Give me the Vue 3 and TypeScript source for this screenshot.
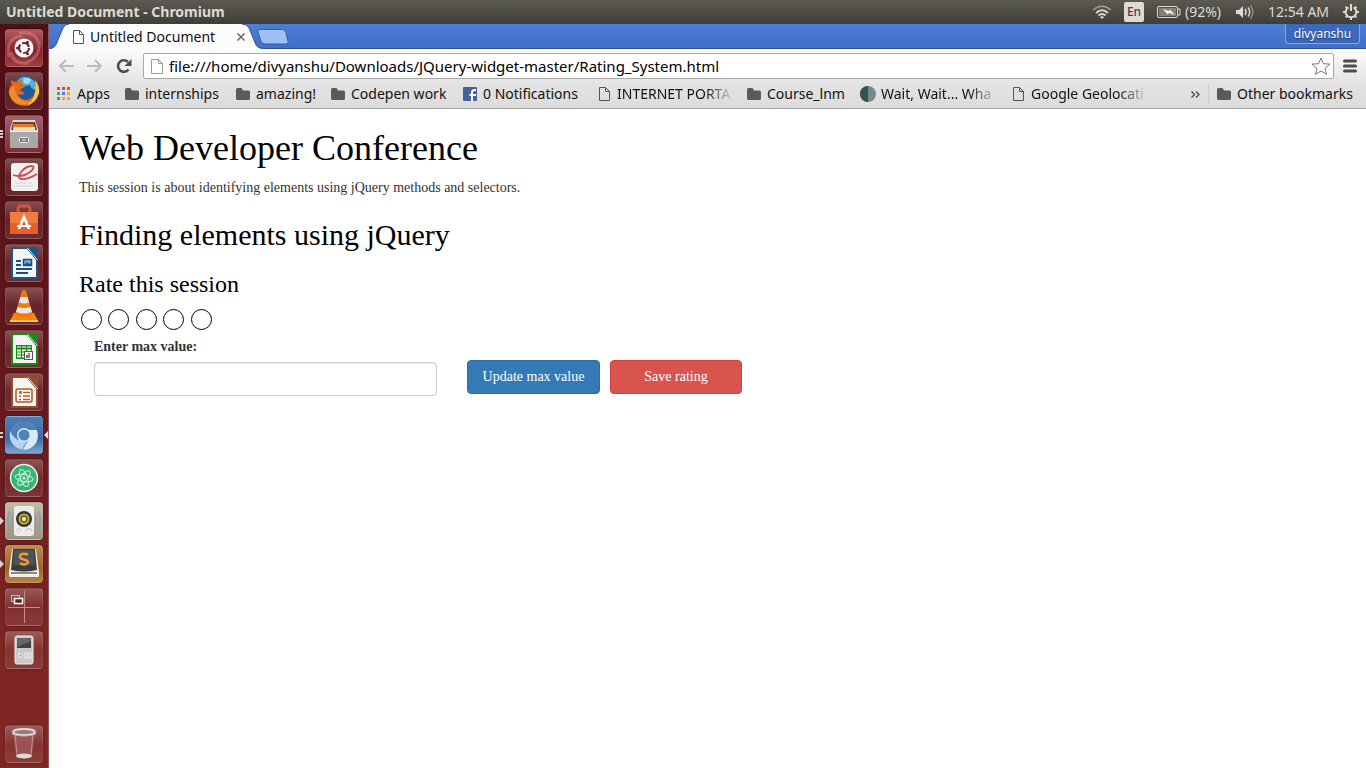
<script setup lang="ts">
import { ref } from 'vue'

interface Launcher {
  id: string
  label: string
  tint?: string
  marks?: number
  active?: boolean
}
interface Bookmark {
  icon: 'apps' | 'folder' | 'facebook' | 'page' | 'disc'
  label: string
  width: number
  fade?: boolean
}

const launchers: Launcher[] = [
  { id: 'dash', label: 'Search your computer', tint: 'dash' },
  { id: 'firefox', label: 'Firefox' },
  { id: 'files', label: 'Files', tint: 'rose', marks: 3 },
  { id: 'viewer', label: 'Document Viewer' },
  { id: 'software', label: 'Software Center' },
  { id: 'writer', label: 'Writer' },
  { id: 'vlc', label: 'VLC' },
  { id: 'calc', label: 'Calc' },
  { id: 'impress', label: 'Impress' },
  { id: 'chromium', label: 'Chromium', tint: 'blue', marks: 2, active: true },
  { id: 'atom', label: 'Atom' },
  { id: 'rhythmbox', label: 'Rhythmbox', tint: 'sand', marks: 1 },
  { id: 'sublime', label: 'Sublime Text', tint: 'amber', marks: 1 },
  { id: 'workspace', label: 'Workspace Switcher' },
  { id: 'player', label: 'Media Player' },
  { id: 'trash', label: 'Trash' },
]

const bookmarks: Bookmark[] = [
  { icon: 'apps', label: 'Apps', width: 68 },
  { icon: 'folder', label: 'internships', width: 111 },
  { icon: 'folder', label: 'amazing!', width: 95 },
  { icon: 'folder', label: 'Codepen work', width: 132 },
  { icon: 'facebook', label: '0 Notifications', width: 134 },
  { icon: 'page', label: 'INTERNET PORTA', width: 150, fade: true },
  { icon: 'folder', label: 'Course_lnm', width: 114 },
  { icon: 'disc', label: 'Wait, Wait... Wha', width: 150, fade: true },
  { icon: 'page', label: 'Google Geolocati', width: 150, fade: true },
]

const dots = ['#e8453c', '#e8453c', '#e8453c', '#3aa757', '#4285f4', '#f9ab00', '#3aa757', '#f9ab00', '#f9ab00']
const address = ref('file:///home/divyanshu/Downloads/JQuery-widget-master/Rating_System.html')
const maxValue = ref('')
const stars = ref(5)

function updateMax(): void {
  const n = Number(maxValue.value)
  if (n > 0) stars.value = n
}
</script>

<template>
  <div class="desktop">
    <header class="panel">
      <span class="panel-title">Untitled Document - Chromium</span>
      <div class="tray">
        <svg class="wifi" width="20" height="16" viewBox="0 0 20 16" fill="none" stroke="#dfdbd2">
          <path d="M1 6Q10-1.500 19 6" stroke-width="1.500" opacity=".55" />
          <path d="M4 9Q10 3.500 16 9" stroke-width="1.800" />
          <path d="M6.500 11.500Q10 8.500 13.500 11.500" stroke-width="1.800" />
          <path d="M8 13q2-1.500 4 0l-2 2z" fill="#dfdbd2" stroke="none" />
        </svg>
        <span class="lang">En</span>
        <span class="battery">
          <svg width="24" height="14" viewBox="0 0 24 14">
            <rect x=".5" y="1.500" width="20" height="11" rx="1.500" fill="none" stroke="#dfdbd2" />
            <rect x="2" y="3" width="17" height="8" fill="#85817a" />
            <path d="M21 4h2v6h-2" fill="none" stroke="#dfdbd2" />
            <path d="M6 4l6 2 1-1.500L18 10l-6-2-1.500 1.500z" fill="#f3efe6" />
          </svg>
          (92%)
        </span>
        <svg class="sound" width="20" height="16" viewBox="0 0 20 16" fill="none" stroke="#dfdbd2" stroke-width="1.500">
          <path d="M1 6h3l4-4v12l-4-4H1z" fill="#dfdbd2" stroke="none" />
          <path d="M10 5q2 3 0 6M13 3.500q3.500 4.500 0 9" />
          <path d="M15.500 1.500q5 6.500 0 13" opacity=".45" />
        </svg>
        <span class="clock">12:54 AM</span>
        <svg width="18" height="18" viewBox="0 0 18 18" fill="none" stroke="#dfdbd2">
          <path d="M6.500 4.300a5.300 5.300 0 1 0 5 0" stroke-width="2" />
          <path d="M9 1v7" stroke-width="2" />
          <path d="M3.600 3.600l1.600 1.600M14.400 3.600l-1.600 1.600M1 9h2.500M14.500 9H17M3.600 14.400l1.600-1.600M14.400 14.400l-1.600-1.600M9 14.500V17" stroke-width="2" />
        </svg>
      </div>
    </header>

    <div class="workspace">
      <nav class="dock" aria-label="Launcher">
        <button
          v-for="item in launchers"
          :key="item.id"
          class="tile"
          :class="[item.tint, { last: item.id === 'trash' }]"
          :aria-label="item.label"
        >
          <svg width="38" height="38" viewBox="0 0 38 38">
            <g v-if="item.id === 'dash'">
              <path d="M4 28Q0 9 17 7M14 4q18-2 20 12M34 12q2 17-14 22M24 34Q8 36 6 23" fill="none" stroke="#d99a9a" stroke-width="3" opacity=".4" />
              <circle cx="19" cy="19" r="9.500" fill="#fff" />
              <circle cx="19" cy="19" r="5" fill="none" stroke="#74232a" stroke-width="2.200" stroke-dasharray="8.500 2" />
              <g fill="#74232a"><circle cx="12.500" cy="19" r="1.500" /><circle cx="22.500" cy="13.200" r="1.500" /><circle cx="22.500" cy="24.800" r="1.500" /></g>
            </g>
            <g v-else-if="item.id === 'firefox'">
              <circle cx="20" cy="17" r="13" fill="#1f5c9f" />
              <path d="M12 9Q19 1 28 8q4 5 3 10-5-1-6-5l-5 1z" fill="#4fb4e4" />
              <path d="M18 7q5-3 8 1l-3 4-4-1z" fill="#b5e8f6" opacity=".8" />
              <path d="M6 8q0 3 1 4Q3 17 4 22q3 11 15 12 12-1 15-13 1-8-4-12 2 7 0 12-3 7-10 7-6-1-7-6 4 2 7-1-2-2-5-2 1-3 5-4-1-3-5-3 1-3 3-4-4-1-6 2-4 0-6-2z" fill="#e8681b" />
              <path d="M30 8q5 6 4 13-3 10-13 13 8-6 9-14 1-6 0-12z" fill="#fbc93d" />
              <path d="M4 20q2 10 10 12 8 2 12-3-8 1-13-4-4-5-3-11-5 1-6 6z" fill="#f08a2a" />
            </g>
            <g v-else-if="item.id === 'files'">
              <path d="M8 5h22l3 9v18H5V14z" fill="#ded9d2" />
              <path d="M8 7h22l2 8H6z" fill="#5a4b45" />
              <path d="M8 9h20l2 6H8z" fill="#e9772c" /><path d="M9 12h21v3H8z" fill="#ffd9ac" />
              <rect x="5" y="16" width="28" height="17" rx="1" fill="#a9a9a6" /><path d="M5 16.500h28" stroke="#eee" />
              <rect x="14.500" y="22.500" width="9" height="5" rx="1" fill="#777" stroke="#eee" /><path d="M17 25h4" stroke="#fff" />
            </g>
            <g v-else-if="item.id === 'viewer'">
              <rect x="6" y="5" width="27" height="28" rx="3" fill="#f1f0ef" />
              <path d="M8 17q9 3 17-3 6-5 2-6-6 0-11 6-4 6 0 7 6 1 16-5" fill="none" stroke="#d3444b" stroke-width="1.800" />
              <path d="M10 25h12M10 28h18M23 25h4" stroke="#d2d2d2" />
            </g>
            <g v-else-if="item.id === 'software'">
              <path d="M13 12V8q0-3 3-3h6q3 0 3 3v4" fill="none" stroke="#c95a3b" stroke-width="3" />
              <path d="M5 11h28v22H5z" fill="#e75f2b" /><path d="M5 11h28v11H5z" fill="#f27a43" />
              <path d="M14 28l5-12 5 12" fill="none" stroke="#fff" stroke-width="2.500" />
              <path d="M12 25h14" stroke="#fff" stroke-width="2" />
            </g>
            <g v-else-if="item.id === 'writer' || item.id === 'calc' || item.id === 'impress'" :class="item.id">
              <path class="ink" d="M6 3h19l8 10v22H6z" />
              <path d="M8 5h14l9 11v17H8z" fill="#f5f5f3" />
              <path class="ink" d="M24 3h9v11z" /><path d="M22.500 4l10 12" stroke="#ddd" />
              <g v-if="item.id === 'writer'" fill="none" stroke="#17507c" stroke-width="2">
                <path d="M11 17h5M11 21h5M11 25h16M11 29h12" /><path d="M18.500 15.500h8v6h-8z" fill="#6db3e0" stroke-width="1.500" /><path d="M19 21l3-3 2 2 2-1v2z" fill="#17507c" stroke="none" />
              </g>
              <g v-else-if="item.id === 'calc'">
                <path d="M11 15h16v14H11z" fill="#178b1a" /><path d="M12 17h4M17 17h4M22 17h4" stroke="#8bd080" stroke-width="2" />
                <path d="M12 20.500h4M17 20.500h4M22 20.500h4M12 23.500h4M17 23.500h4M12 26.500h4M17 26.500h4" stroke="#ecf8e8" stroke-width="2" />
                <rect x="19.500" y="21.500" width="8" height="8" fill="#fff" stroke="#555" /><path d="M21 28v-3h2v3" fill="#2b82bf" /><path d="M23 28v-5h2v5" fill="#e3662b" />
              </g>
              <g v-else>
                <rect x="11" y="16" width="16" height="13" rx="2" fill="#fff" stroke="#b4541c" stroke-width="1.500" />
                <rect x="14" y="18" width="3" height="3" fill="#d6702d" /><path d="M18 19.500h7M14 23h2M18 23h7M14 26.500h2M18 26.500h7" stroke="#c4571b" stroke-width="1.500" />
              </g>
            </g>
            <g v-else-if="item.id === 'vlc'">
              <path d="M9 26h20l4 8H5z" fill="#f28b0c" /><path d="M5 33h28v2H5z" fill="#ffc050" />
              <path d="M17 4q2-2 4 0l7 24q-9 5-18 0z" fill="#f17b0b" />
              <path d="M15.500 10h7l1.500 5.500q-5 2-10 0zM12.700 20q6.500 2 12.700 0l1.600 5q-8 3-16 0z" fill="#e7e7e4" />
            </g>
            <g v-else-if="item.id === 'chromium'">
              <circle cx="19" cy="20" r="14" fill="#7faed9" />
              <path d="M5 17q3-9 13-11 10 0 15 10H19L14 27Q5 28 5 17z" fill="#4d7fb8" />
              <path d="M5 15q-2 10 6 16 3 2 6 2l4-8-8-1q-5-3-8-9z" fill="#b7d3ed" /><path d="M20 14h12q3 11-5 17-4 3-9 3l7-12q0-5-5-8z" fill="#dbe9f7" />
              <circle cx="19" cy="19" r="7" fill="#d7e6f5" /><circle cx="19" cy="19" r="5.500" fill="#4f83bd" />
            </g>
            <g v-else-if="item.id === 'atom'">
              <circle cx="19" cy="19" r="13.500" fill="#35b57c" stroke="#e6f1e9" stroke-width="1.500" />
              <g fill="none" stroke="#c9f2d3"><ellipse cx="19" cy="19" rx="3.500" ry="9" transform="rotate(-20 19 19)" /><ellipse cx="19" cy="19" rx="3.500" ry="9" transform="rotate(40 19 19)" /><ellipse cx="19" cy="19" rx="3.500" ry="9" transform="rotate(100 19 19)" /></g>
              <circle cx="19" cy="19" r="1.500" fill="#d9f7df" />
            </g>
            <g v-else-if="item.id === 'rhythmbox'">
              <path d="M8 11q-3 7 0 15M5 9q-4 9 0 19M30 11q3 7 0 15M33 9q4 9 0 19" fill="none" stroke="#8b9da8" stroke-width="1.500" />
              <rect x="9" y="4" width="20" height="30" rx="3" fill="#eceded" />
              <circle cx="19" cy="17" r="8" fill="#34373a" /><circle cx="19" cy="17" r="5.500" fill="#c9ad27" /><circle cx="19" cy="17" r="3" fill="#e6dc84" stroke="#222" />
              <circle cx="14" cy="28" r="2" fill="none" stroke="#ccc" /><path d="M20 29q5-5 7 0" fill="none" stroke="#bbb" />
            </g>
            <g v-else-if="item.id === 'sublime'">
              <path d="M7 4h24l3 23v4q0 1-2 1H6q-2 0-2-1v-4z" fill="#f3f1ee" />
              <path d="M6 27h26v2H6z" fill="#8b8884" />
              <path d="M8 4h22l2 21q-13 3-26 0z" fill="#3c3b3b" /><path d="M9 5h20l1 15H8z" fill="#535252" />
              <path d="M23 9.500q-7-2-8 1.500-1 2.500 4 3.500 4 1 4 3-2 3.500-8 1" fill="none" stroke="#f29a38" stroke-width="2.500" />
            </g>
            <g v-else-if="item.id === 'workspace'" fill="none" stroke="#c68b8b">
              <path d="M19.500 3v32M3 19.500h32" /><rect x="6.500" y="7.500" width="8" height="6" stroke="#bbb" /><rect x="9.500" y="10.500" width="8" height="5" fill="#4c2527" stroke="#fff" stroke-width="1.500" />
            </g>
            <g v-else-if="item.id === 'player'">
              <rect x="10" y="5" width="18" height="28" rx="2" fill="#cacaca" stroke="#eee" /><path d="M12 7h14v10H12z" fill="#444" /><path d="M12 7h14v3L12 16z" fill="#666" />
              <path d="M14 22v5l4-2.500zM20 22h2v5h-2zM24 22h2v5h-2z" fill="#aaa" stroke="#f4f4f4" />
            </g>
            <g v-else>
              <path d="M8 7h22l-3 24q-8 4-16 0z" fill="#a9696b" opacity=".55" /><path d="M10 9l2 21M28 9l-2 21" stroke="#dfb7b7" opacity=".6" />
              <ellipse cx="19" cy="7" rx="11" ry="3" fill="#9b7b7a" stroke="#dedad7" stroke-width="2" /><path d="M7 9q12 4 24 0" stroke="#bbb" fill="none" />
              <ellipse cx="19" cy="31" rx="8" ry="2.500" fill="#dadada" />
            </g>
          </svg>
          <svg v-if="item.marks" class="mark" width="4" height="10" viewBox="0 0 4 10" fill="#d9cccc">
            <path v-if="item.marks === 1" d="M0 1l4 4-4 4z" />
            <path v-else-if="item.marks === 2" d="M0 2h3v2H0zM0 6h3v2H0z" />
            <path v-else d="M0 1h3v2H0zM0 4h3v2H0zM0 7h3v2H0z" />
          </svg>
          <svg v-if="item.active" class="mark current" width="4" height="8" viewBox="0 0 4 8"><path d="M4 0v8L0 4z" fill="#e5dddd" /></svg>
        </button>
      </nav>

      <div class="browser">
        <div class="tabs">
          <div class="tab">
            <svg class="tab-shape" viewBox="0 0 216 25" preserveAspectRatio="none">
              <path d="M0 25q5 0 7-4L14 4q2-4 6-4h173q5 0 7 4l7 17q2 4 9 4z" fill="#fbfbfb" />
              <path d="M0 24.500q5 0 7-4L14 4q2-4 6-4M193 0q5 0 7 4l7 17q2 3.500 9 3.500" fill="none" stroke="#315596" />
            </svg>
            <svg width="11" height="14" viewBox="0 0 11 14" fill="#fff" stroke="#555"><path d="M.5.5h6l4 4v9H.5zM6.500.5v4h4" /></svg>
            <span class="tab-name">Untitled Document</span>
            <button class="close" aria-label="Close tab"><svg width="8" height="8" viewBox="0 0 8 8" stroke="#666" stroke-width="1.500"><path d="M.5.5l7 7M7.500.5l-7 7" /></svg></button>
          </div>
          <button class="new-tab" aria-label="New tab">
            <svg width="32" height="16" viewBox="0 0 32 16"><path d="M3 .5h22q3 0 4 3l2 9q1 2.500-2 2.500H8q-3 0-4-3L1 3Q0 .5 3 .5z" fill="#9dc1f2" stroke="#335da9" /></svg>
          </button>
          <button class="profile">divyanshu</button>
        </div>

        <div class="chrome">
          <div class="toolbar">
            <button class="nav" aria-label="Back"><svg width="16" height="14" viewBox="0 0 16 14" fill="none" stroke="#bcbcbc" stroke-width="2"><path d="M16 7H2M8 1L2 7l6 6" /></svg></button>
            <button class="nav" aria-label="Forward"><svg width="16" height="14" viewBox="0 0 16 14" fill="none" stroke="#bcbcbc" stroke-width="2"><path d="M0 7h14M8 1l6 6-6 6" /></svg></button>
            <button class="nav" aria-label="Reload"><svg width="16" height="16" viewBox="0 0 16 16"><path d="M12.500 11.500A5.800 5.800 0 1 1 12 4" fill="none" stroke="#4d4d4d" stroke-width="2.600" /><path d="M15.500 1v7H8.500z" fill="#4d4d4d" /></svg></button>
            <div class="omnibox">
              <svg width="12" height="15" viewBox="0 0 12 15" fill="#fff" stroke="#999"><path d="M.5.5h7l4 4v10H.5zM7.500.5v4h4" /></svg>
              <input v-model="address" type="text" aria-label="Address" spellcheck="false" />
              <button class="star" aria-label="Bookmark this page"><svg width="20" height="18" viewBox="0 0 20 18"><path d="M10 1l2.400 5.700 6.600.4-5 4.200 1.600 6L10 14l-5.600 3.300 1.600-6-5-4.200 6.600-.4z" fill="#fff" stroke="#777" /></svg></button>
            </div>
            <button class="menu" aria-label="Menu"><svg width="14" height="14" viewBox="0 0 14 14" stroke="#4d4d4d" stroke-width="3" stroke-linecap="round"><path d="M1.500 2h11M1.500 7h11M1.500 12h11" /></svg></button>
          </div>

          <nav class="bookmarks" aria-label="Bookmarks">
            <a v-for="mark in bookmarks" :key="mark.label" href="#" class="bookmark" :style="{ width: mark.width + 'px' }">
              <span class="favicon">
                <svg v-if="mark.icon === 'apps'" width="14" height="14" viewBox="0 0 14 14">
                  <rect v-for="(dot, i) in dots" :key="i" :x="(i % 3) * 5" :y="Math.floor(i / 3) * 5" width="3" height="3" :fill="dot" />
                </svg>
                <svg v-else-if="mark.icon === 'folder'" width="14" height="12" viewBox="0 0 14 12"><path d="M0 1.500Q0 0 1.500 0h4L7 2.500h5.500Q14 2.500 14 4v6.500q0 1.500-1.500 1.500h-11Q0 12 0 10.500z" fill="#5a5a5a" /></svg>
                <svg v-else-if="mark.icon === 'facebook'" width="14" height="14" viewBox="0 0 14 14"><rect width="14" height="14" rx="1" fill="#45619d" /><path d="M9 14V5.500Q9 3 11.500 3h1.500M6.500 8H13" stroke="#fff" stroke-width="2" fill="none" /></svg>
                <svg v-else-if="mark.icon === 'page'" width="11" height="14" viewBox="0 0 11 14" fill="none" stroke="#555"><path d="M.5.5h6l4 4v9H.5zM6.500.5v4h4" /></svg>
                <svg v-else width="16" height="16" viewBox="0 0 16 16"><circle cx="8" cy="8" r="8" fill="#728c8b" /><path d="M8 0v16A8 8 0 0 1 8 0z" fill="#36524f" /></svg>
              </span>
              <span class="mark-name" :class="{ fade: mark.fade }">{{ mark.label }}</span>
            </a>
            <div class="overflow">
              <button class="more" aria-label="More bookmarks"><svg width="9" height="7" viewBox="0 0 9 7" fill="none" stroke="#555" stroke-width="1.500"><path d="M.5.5l3 3-3 3M5 .5l3 3-3 3" /></svg></button>
              <a href="#" class="bookmark other">
                <span class="favicon"><svg width="14" height="12" viewBox="0 0 14 12"><path d="M0 1.500Q0 0 1.500 0h4L7 2.500h5.500Q14 2.500 14 4v6.500q0 1.500-1.500 1.500h-11Q0 12 0 10.500z" fill="#5a5a5a" /></svg></span>
                <span class="mark-name">Other bookmarks</span>
              </a>
            </div>
          </nav>
        </div>

        <main class="page">
          <h1>Web Developer Conference</h1>
          <p>This session is about identifying elements using jQuery methods and selectors.</p>
          <h2>Finding elements using jQuery</h2>
          <h3>Rate this session</h3>
          <div class="rating">
            <button v-for="n in stars" :key="n" :aria-label="'Rate ' + n"></button>
          </div>
          <form @submit.prevent="updateMax">
            <label for="max-value">Enter max value:</label>
            <div class="controls">
              <input id="max-value" v-model="maxValue" type="text" />
              <div class="actions">
                <button type="submit" class="primary">Update max value</button>
                <button type="button" class="danger">Save rating</button>
              </div>
            </div>
          </form>
        </main>
      </div>
    </div>
  </div>
</template>

<style>
body { margin: 0; }
</style>

<style scoped>
* { box-sizing: border-box; }
button { padding: 0; border: 0; background: none; font: inherit; cursor: pointer; }
svg { display: block; flex: none; }
.desktop { display: flex; flex-direction: column; min-height: 100vh; font: 14px/20px "Noto Sans", sans-serif; }
.panel { display: flex; align-items: center; justify-content: space-between; height: 24px; padding: 0 6px; color: #dfdbd2; background: linear-gradient(#5b5951, #3f3e39); }
.panel-title { font-weight: 700; font-size: 14px; white-space: nowrap; }
.tray { display: flex; align-items: center; font-size: 14px; white-space: nowrap; }
.lang { width: 20px; height: 20px; margin: 0 13px 0 12px; border-radius: 2px; color: #45433e; background: #dfdbd2; font-size: 12px; font-weight: 500; text-align: center; }
.battery { display: flex; align-items: center; gap: 4px; width: 65px; }
.sound { margin: 0 13px; }
.clock { width: 62px; margin-right: 12px; }
.workspace { display: flex; flex: 1; }
.dock { display: flex; flex-direction: column; gap: 5px; flex: none; width: 49px; padding: 5px 5px 5px; border-right: 1px solid #8d5358; background: linear-gradient(#500e15, #671a1e 55%, #7e2622 85%, #7e2724); }
.tile { position: relative; width: 38px; height: 38px; border: 1px solid rgba(255, 255, 255, 0.1); border-radius: 4px; background: linear-gradient(rgba(255, 255, 255, 0.25), rgba(255, 255, 255, 0.06) 50%, rgba(255, 255, 255, 0.1)); box-shadow: 0 0 2px rgba(0, 0, 0, 0.5); }
.tile > svg:first-child { margin: -1px; }
.tile.dash { background: linear-gradient(#b45a5c, #86242a 55%, #a23a3c); }
.tile.rose { background: linear-gradient(#a6616b, #7d2c3a); }
.tile.blue { background: linear-gradient(#4f7fb8, #3a6aa4 60%, #78a5d2); }
.tile.sand { background: linear-gradient(#c2bba8, #9c957f); }
.tile.amber { background: linear-gradient(#bd8c53, #9c6229 60%, #b98043); }
.tile.last { margin-top: auto; }
.mark { position: absolute; left: -6px; top: 13px; }
.mark.current { left: auto; right: -6px; top: 14px; }
.writer .ink { fill: #16588d; }
.calc .ink { fill: #178b1a; }
.impress .ink { fill: #984c20; }
.browser { display: flex; flex-direction: column; flex: 1; min-width: 0; background: #fff; }
.tabs { display: flex; align-items: flex-start; height: 25px; padding-right: 6px; border-bottom: 1px solid #315291; background: linear-gradient(#4d7ed4, #426fc9); }
.tab { position: relative; display: flex; align-items: center; width: 216px; height: 25px; padding: 0 20px 0 24px; }
.tab-shape { position: absolute; inset: 0; width: 100%; height: 100%; }
.tab > :not(.tab-shape) { position: relative; }
.tab-name { flex: 1; margin-left: 6px; white-space: nowrap; color: #111; }
.new-tab { margin: 5px 0 0 -8px; }
.profile { width: 75px; height: 20px; margin-left: auto; border: 1px solid #83a7e5; border-top: 0; border-radius: 0 0 4px 4px; color: #fff; background: #3d68b9; font-size: 12px; line-height: 20px; text-shadow: 0 1px 1px #1c335f; }
.chrome { height: 60px; border-bottom: 1px solid #a5a5a5; background: linear-gradient(#fbfbfb, #e3e3e3 60%, #dcdcdc); }
.toolbar { display: flex; align-items: center; height: 34px; padding: 0 9px; }
.nav { display: grid; place-items: center; width: 16px; margin-right: 13px; }
.nav:nth-child(3) { margin-right: 11px; }
.omnibox { display: flex; align-items: center; flex: 1; height: 26px; padding: 0 2px 0 7px; border: 1px solid #a9a9a9; border-radius: 2px; background: #fff; }
.omnibox input { flex: 1; min-width: 0; padding: 0; margin-left: 6px; border: 0; outline: 0; background: none; color: #000; font: 15px/20px "Noto Sans", sans-serif; }
.menu { margin-left: 9px; }
.bookmarks { display: flex; align-items: center; height: 22px; padding-left: 8px; font-size: 14px; }
.bookmark { display: flex; align-items: center; gap: 6px; flex: none; color: #111; text-decoration: none; }
.favicon { display: flex; justify-content: center; width: 14px; flex: none; }
.mark-name { white-space: nowrap; }
.mark-name.fade { width: 117px; -webkit-mask-image: linear-gradient(90deg, #000 75%, transparent); mask-image: linear-gradient(90deg, #000 75%, transparent); }
.overflow { display: flex; align-items: center; margin-left: auto; padding-right: 5px; }
.more { margin-right: 8px; }
.other { width: 153px; padding-left: 8px; border-left: 1px solid #c5d3df; }
.page { padding: 20px 30px; color: #333; font: 14px/20px "Liberation Serif", serif; }
h1, h2, h3 { margin: 0; color: #000; font-weight: 400; }
h1 { font-size: 36px; line-height: 39px; }
p { margin: 10px 0 20px; }
h2 { font-size: 30px; line-height: 33px; }
h3 { margin-top: 20px; font-size: 24px; line-height: 27px; }
.rating { display: grid; grid-template-columns: repeat(5, 1fr); width: 137px; margin: 11px 2px 7px; }
.rating button { width: 21px; height: 21px; border: 1px solid #000; border-radius: 50%; background: #fff; }
form { max-width: 678px; padding: 0 15px; }
label { display: block; margin-bottom: 5px; font-weight: 700; }
.controls { display: flex; gap: 30px; }
.controls input { flex: 1; min-width: 0; height: 34px; padding: 6px 12px; border: 1px solid #ccc; border-radius: 4px; background: #fff; box-shadow: inset 0 1px 1px rgba(0, 0, 0, 0.08); font: inherit; }
.actions { display: flex; gap: 10px; margin-top: -2px; }
.actions button { width: 133px; height: 34px; border: 1px solid; border-radius: 4px; color: #fff; }
.actions .primary { border-color: #2e6da4; background: #337ab7; }
.actions .danger { width: 132px; border-color: #d43f3a; background: #d9534f; }
</style>
